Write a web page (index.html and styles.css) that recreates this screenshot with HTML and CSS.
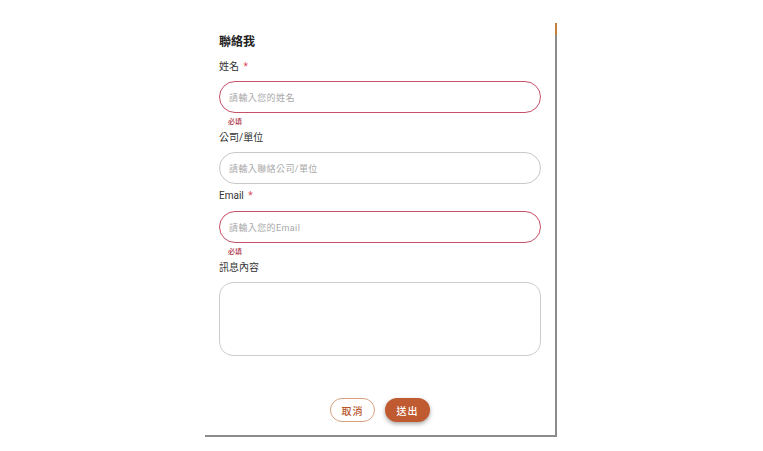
FILE: index.html
```html
<!DOCTYPE html>
<html lang="zh-Hant">
<head>
<meta charset="utf-8">
<title>聯絡我</title>
<link rel="stylesheet" href="styles.css">
</head>
<body>
<div class="dialog">
  <h1 class="title">聯絡我</h1>
  <div class="field">
    <label class="label">姓名 <span class="req">*</span></label>
    <div class="input error"><span class="ph">請輸入您的姓名</span></div>
    <div class="hint">必填</div>
  </div>
  <div class="field">
    <label class="label">公司/單位</label>
    <div class="input"><span class="ph">請輸入聯絡公司/單位</span></div>
  </div>
  <div class="field field-loose">
    <label class="label">Email <span class="req">*</span></label>
    <div class="input error"><span class="ph">請輸入您的Email</span></div>
    <div class="hint">必填</div>
  </div>
  <div class="field">
    <label class="label">訊息內容</label>
    <div class="textarea"></div>
  </div>
  <div class="actions">
    <button class="btn btn-outline">取消</button>
    <button class="btn btn-fill">送出</button>
  </div>
</div>
</body>
</html>
```

FILE: styles.css
```css
html, body {
  margin: 0;
  padding: 0;
  background: #ffffff;
}
body {
  font-family: Roboto, "Noto Sans CJK TC", "Noto Sans", sans-serif;
  color: #333333;
}
.dialog {
  position: relative;
  box-sizing: border-box;
  margin: 23px 0 0 205px;
  width: 352px;
  height: 414px;
  padding: 11px 14px 0 14px;
  background: #ffffff;
  border-right: 2px solid #8c8c8c;
  border-bottom: 2px solid #8c8c8c;
  display: flex;
  flex-direction: column;
}
.dialog::after {
  content: "";
  position: absolute;
  right: -2px;
  top: 0;
  width: 2px;
  height: 12px;
  background: #c4823f;
}
.title {
  margin: 0;
  font-size: 12px;
  line-height: 16px;
  font-weight: 700;
  color: #222222;
}
.field {
  display: flex;
  flex-direction: column;
}
.label {
  margin-top: 10px;
  font-size: 10px;
  line-height: 14px;
  color: #333333;
}
.field + .field .label {
  margin-top: 4px;
}
.field.field-loose .label {
  margin-top: 5px;
}
.field.field-loose .input {
  margin-top: 8px;
}
.req {
  color: #e0485a;
  margin-left: 2px;
}
.input {
  box-sizing: border-box;
  margin-top: 7px;
  height: 32px;
  border: 1px solid #c8c8c8;
  border-radius: 16px;
  display: flex;
  align-items: center;
  padding-left: 9px;
}
.input.error {
  border-color: #c5506a;
}
.ph {
  font-size: 9px;
  color: #a8a8a8;
  letter-spacing: 0.4px;
}
.hint {
  margin-top: 4px;
  padding-left: 9px;
  font-size: 7px;
  line-height: 10px;
  color: #b03545;
  font-weight: 500;
}
.textarea {
  box-sizing: border-box;
  margin-top: 7px;
  height: 74px;
  border: 1px solid #cccccc;
  border-radius: 14px;
}
.actions {
  margin-top: 42px;
  display: flex;
  justify-content: center;
  gap: 10px;
}
.btn {
  box-sizing: border-box;
  width: 45px;
  height: 24px;
  border-radius: 12px;
  font-family: Roboto, "Noto Sans CJK TC", sans-serif;
  font-size: 10px;
  font-weight: 500;
  letter-spacing: 1px;
  padding: 0;
  cursor: pointer;
}
.btn-outline {
  background: #ffffff;
  border: 1px solid #d8a080;
  color: #b8582e;
}
.btn-fill {
  background: #c05a30;
  border: none;
  color: #ffffff;
  box-shadow: 0 2px 4px rgba(0, 0, 0, 0.35);
}
```
